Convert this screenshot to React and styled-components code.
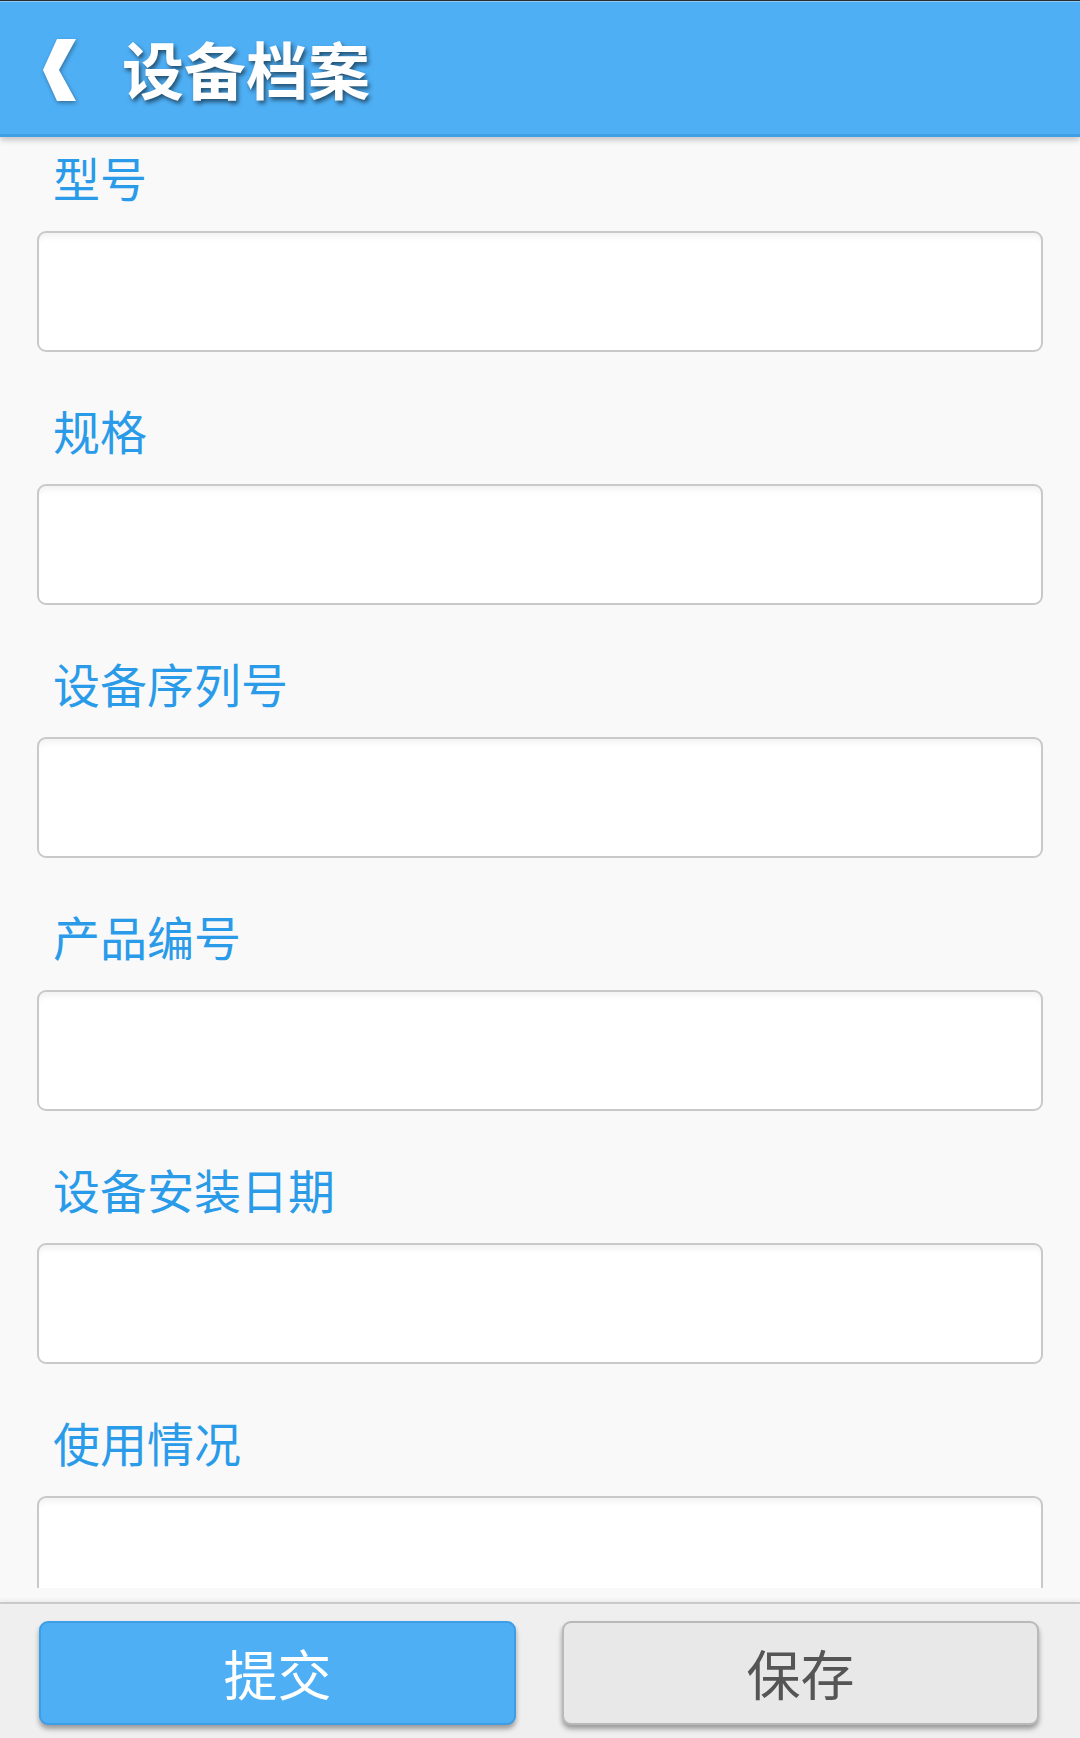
import React from "react";
import styled, { createGlobalStyle } from "styled-components";

const Global = createGlobalStyle`
  html, body { margin: 0; padding: 0; background: #f9f9f9; }
  * { box-sizing: border-box; }
  body { font-family: "Noto Sans CJK SC", "Noto Sans", sans-serif; }
`;

const Page = styled.div`
  height: 1738px;
  display: flex;
  flex-direction: column;
  background: #f9f9f9;
  overflow: hidden;
`;

const Header = styled.header`
  position: relative;
  z-index: 2;
  flex: 0 0 137px;
  height: 137px;
  background: #4eaff5;
  border-top: 1px solid #2b2b2b;
  border-bottom: 3px solid #3e9fe4;
  box-shadow: inset 0 1px 0 rgba(255, 255, 255, 0.35), 0 3px 6px rgba(0, 0, 0, 0.22);
  display: flex;
  align-items: center;
  padding-left: 43px;
  gap: 45px;
`;

const BackIcon = styled.svg`
  width: 34px;
  height: 62px;
  margin-top: 4px;
  filter: drop-shadow(1px 2px 2px rgba(0, 0, 0, 0.35));
  flex: none;
`;

const Title = styled.h1`
  margin: 0;
  font-family: "Noto Sans CJK SC", sans-serif;
  font-weight: 700;
  font-size: 62px;
  line-height: 62px;
  color: #ffffff;
  text-shadow: 2px 3px 4px rgba(0, 0, 0, 0.55);
`;

const Content = styled.main`
  flex: 1;
  min-height: 0;
  overflow: hidden;
  margin-bottom: 14px;
  padding: 17px 37px 0;
`;

const Field = styled.div`
  display: flex;
  flex-direction: column;
  & + & { margin-top: 55px; }
`;

const Label = styled.label`
  font-family: "Noto Sans CJK SC", sans-serif;
  font-size: 47px;
  line-height: 46px;
  color: #2a9be9;
  padding-left: 16px;
  margin-bottom: 31px;
`;

const Input = styled.input`
  display: block;
  width: 100%;
  height: 121px;
  border: 2px solid #c9c9c9;
  border-radius: 9px;
  background: #ffffff;
  box-shadow: inset 0 8px 6px -4px rgba(0, 0, 0, 0.05);
  outline: none;
  font-size: 40px;
`;

const Footer = styled.footer`
  flex: 0 0 136px;
  height: 136px;
  background: #efefef;
  border-top: 2px solid #cacaca;
  box-shadow: 0 -2px 4px rgba(0, 0, 0, 0.06);
  display: flex;
  gap: 46px;
  padding: 17px 41px 0 39px;
`;

const Button = styled.button`
  flex: 1;
  height: 104px;
  border-radius: 9px;
  border: 2px solid ${(p) => (p.$primary ? "#3d9ee6" : "#b9b9b9")};
  background: ${(p) => (p.$primary ? "#4eaff5" : "#e8e8e8")};
  color: ${(p) => (p.$primary ? "#ffffff" : "#555555")};
  font-family: "Noto Sans CJK SC", sans-serif;
  font-size: 54px;
  line-height: 1;
  box-shadow: 0 4px 5px rgba(0, 0, 0, 0.35);
  padding: 0;
  cursor: pointer;
`;

const fields = ["型号", "规格", "设备序列号", "产品编号", "设备安装日期", "使用情况"];

export default function App() {
  return (
    <>
      <Global />
      <Page>
        <Header>
          <BackIcon viewBox="0 0 34 62">
            <path d="M33 0 L14 0 L0 31 L14 62 L33 62 L16 31 Z" fill="#ffffff" />
          </BackIcon>
          <Title>设备档案</Title>
        </Header>
        <Content>
          {fields.map((f) => (
            <Field key={f}>
              <Label>{f}</Label>
              <Input type="text" />
            </Field>
          ))}
        </Content>
        <Footer>
          <Button $primary>提交</Button>
          <Button>保存</Button>
        </Footer>
      </Page>
    </>
  );
}
